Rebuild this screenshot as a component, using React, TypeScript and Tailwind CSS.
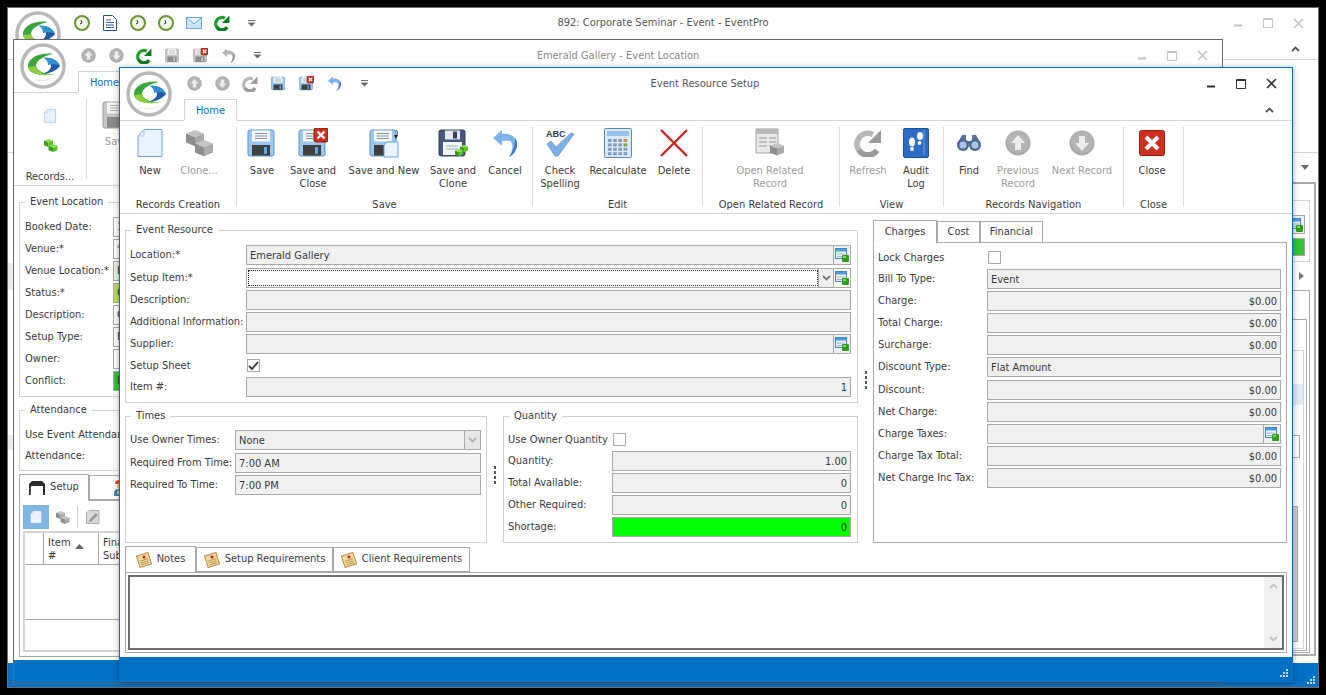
import React from 'react';

const cubeFaces = {
  gray: ['#c4c4c4', '#8e8e8e', '#a8a8a8'],
  green: ['#8ce04a', '#3f9a1c', '#5cc22c'],
};

// one isometric cube, x/y is the top corner
const Cube: React.FC<{ x: number; y: number; s: number; tone?: 'gray' | 'green' }> = ({ x, y, s, tone = 'gray' }) => {
  const [top, left, right] = cubeFaces[tone];
  return (
    <g>
      <polygon points={`${x},${y} ${x + s},${y + s * 0.4} ${x},${y + s * 0.8} ${x - s},${y + s * 0.4}`} fill={top} />
      <polygon points={`${x - s},${y + s * 0.4} ${x},${y + s * 0.8} ${x},${y + s * 1.8} ${x - s},${y + s * 1.4}`} fill={left} />
      <polygon points={`${x + s},${y + s * 0.4} ${x},${y + s * 0.8} ${x},${y + s * 1.8} ${x + s},${y + s * 1.4}`} fill={right} />
    </g>
  );
};

const Logo: React.FC<{ size?: number }> = ({ size = 46 }) => (
  <svg width={size} height={size} viewBox="0 0 46 46">
    <circle cx="23" cy="23" r="21" fill="#fff" stroke="#b9b9b9" strokeWidth="3.5" />
    <path d="M33 11C20 9 8 15 8 23c0 8 14 11 28 8-11 1-20-3-20-9 1-5 8-9 17-11z" fill="#3aa63c" />
    <path d="M8 24c1 7 14 10 28 7-11 1-19-2-20-8z" fill="#8ccf3c" />
    <path d="M24 15c8-1 14 3 16 8-3 4-10 8-18 8 6-2 9-5 9-8 0-3-3-6-7-8z" fill="#1f5aa8" />
    <path d="M24 15c8-1 14 3 15 7-4-1-8-1-11 0 0-3-1-5-4-7z" fill="#2f8fd0" />
    <path d="M14 36c6 2 14 1 20-3-6 6-14 7-20 3z" fill="#e6ecd8" />
  </svg>
);

const RoundArrow: React.FC<{ size: number; down?: boolean }> = ({ size, down }) => (
  <svg width={size} height={size} viewBox="0 0 26 26">
    <circle cx="13" cy="13" r="12.5" fill="#a9a9a9" />
    <circle cx="13" cy="12" r="11" fill="#b4b4b4" />
    <path
      d={down ? 'M10 6h6v7h4l-7 8-7-8h4z' : 'M10 20h6v-7h4l-7-8-7 8h4z'}
      fill="#ececec"
    />
  </svg>
);

const Refresh: React.FC<{ size: number; color: string; dark: string }> = ({ size, color, dark }) => (
  <svg width={size} height={size} viewBox="0 0 28 28">
    <path d="M23 21.500A11 11 0 1 1 19 5.500" fill="none" stroke={color} strokeWidth="5.500" />
    <path d="M23 21.500A11 11 0 0 1 5 21" fill="none" stroke={dark} strokeWidth="5.500" />
    <path d="M27 1v13H14z" fill={dark} />
  </svg>
);

type SaveBadge = 'none' | 'x' | 'new' | 'cubes';

const Floppy: React.FC<{ size: number; tone?: 'blue' | 'gray' | 'navy'; badge?: SaveBadge }> = ({ size, tone = 'blue', badge = 'none' }) => {
  const pal = {
    blue: { body: '#9cc6ee', edge: '#5b93cc', label: '#f4f8fc', low: '#3f3f3f', slot: '#5fa6e0' },
    gray: { body: '#c6c6c6', edge: '#9c9c9c', label: '#f2f2f2', low: '#8a8a8a', slot: '#d0d0d0' },
    navy: { body: '#46587e', edge: '#33415f', label: '#e8eef6', low: '#f2f5f9', slot: '#3a3a3a' },
  }[tone];
  const navy = tone === 'navy';
  return (
    <svg width={size} height={size} viewBox="0 0 30 30">
      <rect x="1" y="2" width="26" height="26" rx="2" fill={pal.body} stroke={pal.edge} />
      {navy ? (
        <>
          <rect x="7" y="2.500" width="15" height="9" fill="#e4e8ee" />
          <rect x="15" y="3.500" width="4" height="7" fill="#33415f" />
          <rect x="5" y="14" width="19" height="13" fill={pal.low} />
          <path d="M8 18h12M8 21h12" stroke="#9fb2cc" />
        </>
      ) : (
        <>
          <rect x="5" y="2.500" width="18" height="11" fill={pal.label} />
          <path d="M8 5.500h12M8 8h12M8 10.500h12" stroke={tone === 'blue' ? '#8a8f96' : '#b0b0b0'} />
          <rect x="5" y="17" width="18" height="10.500" fill={pal.low} />
          <rect x="17" y="19" width="3" height="7" fill={pal.slot} />
        </>
      )}
      {badge === 'x' && (
        <g>
          <rect x="16" y="0" width="14" height="14" rx="2" fill="#c9301f" stroke="#8c1c10" />
          <path d="M19.500 3.500l7 7M26.500 3.500l-7 7" stroke="#fff" strokeWidth="2.400" />
        </g>
      )}
      {badge === 'new' && (
        <g>
          <path d="M18 14h11v15H15V17z" fill="#eaf3fc" stroke="#6fa6dc" />
          <path d="M27 2c2 1 2 4 0 6" fill="none" stroke="#333" />
          <path d="M25 7h4l-2 4z" fill="#222" />
        </g>
      )}
      {badge === 'cubes' && (
        <g>
          <Cube x={26} y={17} s={4} tone="green" />
          <Cube x={21} y={21} s={4} tone="green" />
        </g>
      )}
    </svg>
  );
};

const Undo: React.FC<{ size: number; color?: string; dark?: string }> = ({ size, color = '#7db2ea', dark = '#3f78c4' }) => (
  <svg width={size} height={size} viewBox="0 0 28 28">
    <path d="M2 9L11 1v4c9-1 16 4 15 12-1 5-4 9-8 11 3-5 4-9 3-13-1-4-5-4-10-3v5z" fill={color} />
    <path d="M18 28c4-2 7-6 8-11 0.400-3-0.500-6-2-8 0 6-1 13-6 19z" fill={dark} />
  </svg>
);

const NewDoc: React.FC<{ size: number }> = ({ size }) => (
  <svg width={size} height={size} viewBox="0 0 30 30">
    <path d="M9 1.500h18v27H3V8z" fill="#eaf3fd" stroke="#6fa6dc" />
    <path d="M3 8H9V1.500" fill="none" stroke="#a9c9ec" />
  </svg>
);

const Clone: React.FC<{ size: number; tone?: 'gray' | 'green' }> = ({ size, tone = 'gray' }) => (
  <svg width={size} height={size} viewBox="0 0 30 30">
    <Cube x={11} y={2} s={9} tone={tone} />
    <Cube x={20} y={12} s={9} tone={tone} />
  </svg>
);

const SpellCheck = () => (
  <svg width="30" height="30" viewBox="0 0 30 30">
    <text x="1" y="9" fontSize="9" fontWeight="700" fontFamily="Liberation Sans, sans-serif" fill="#2f3e55">ABC</text>
    <path d="M2 16l4-3 5 6L26 5l3 1-16 22h-3z" fill="#7fb0e2" stroke="#4f86c4" strokeWidth="0.600" />
  </svg>
);

const Calculator = () => (
  <svg width="28" height="30" viewBox="0 0 28 30">
    <rect x="0.500" y="0.500" width="27" height="29" rx="1" fill="#dde8f6" stroke="#5d86bd" />
    <rect x="3" y="3" width="22" height="5" fill="#9ac3ea" />
    {[0, 1, 2, 3].flatMap((c) =>
      [0, 1, 2, 3].map((r) => (
        <rect
          key={`${c}-${r}`}
          x={4 + c * 5.2}
          y={11 + r * 4.4}
          width="3.600"
          height="3"
          fill={c === 3 && r === 0 ? '#d8903c' : c === 3 && r === 1 ? '#7aa83c' : '#7f9cc6'}
        />
      )),
    )}
  </svg>
);

const DeleteX = () => (
  <svg width="28" height="30" viewBox="0 0 28 30">
    <path d="M1 2l26 26M27 2L1 28" stroke="#c8241c" strokeWidth="2.400" />
  </svg>
);

const RelatedRecord = () => (
  <svg width="30" height="30" viewBox="0 0 30 30">
    <rect x="1" y="1" width="22" height="24" fill="#e8e8e8" stroke="#a4a4a4" />
    <rect x="1" y="1" width="22" height="5" fill="#b8b8b8" />
    <path d="M4 10h8M14 10h7M4 14h8M14 14h7M4 18h8M14 18h7" stroke="#b4b4b4" strokeWidth="1.500" />
    <Cube x={22} y={15} s={7} />
  </svg>
);

const AuditLog = () => (
  <svg width="26" height="30" viewBox="0 0 26 30">
    <rect x="0.500" y="0.500" width="25" height="29" rx="1.500" fill="#2d6cc4" stroke="#1d4f9a" />
    <path d="M21 2v25" stroke="#6ca0e0" />
    <ellipse cx="9" cy="14" rx="3" ry="4.500" fill="#f4f8ff" />
    <ellipse cx="9" cy="21" rx="2" ry="2" fill="#f4f8ff" />
    <ellipse cx="17" cy="8" rx="3" ry="4" fill="#f4f8ff" />
    <ellipse cx="16.500" cy="15" rx="2" ry="2" fill="#f4f8ff" />
  </svg>
);

const Binoculars = () => (
  <svg width="26" height="18" viewBox="0 0 26 18">
    <path d="M6 1h4v6h6V1h4l5 9H1z" fill="#5a7398" />
    <circle cx="7" cy="11" r="6" fill="#4d6a94" />
    <circle cx="19" cy="11" r="6" fill="#4d6a94" />
    <circle cx="7" cy="11" r="3.500" fill="#a9c6ea" />
    <circle cx="19" cy="11" r="3.500" fill="#a9c6ea" />
  </svg>
);

const CloseRed = () => (
  <svg width="26" height="26" viewBox="0 0 26 26">
    <rect x="0.500" y="0.500" width="25" height="25" rx="2" fill="#cc2f1e" stroke="#97200f" />
    <path d="M7 7l12 12M19 7L7 19" stroke="#fff" strokeWidth="4" />
  </svg>
);

const Lookup = () => (
  <svg width="14" height="14" viewBox="0 0 14 14">
    <rect x="0.500" y="0.500" width="11" height="10" fill="#eef4fb" stroke="#3f86d0" />
    <rect x="1" y="1" width="10" height="2.500" fill="#4d9be0" />
    <path d="M2 6h8M2 8.500h5" stroke="#9cb4cc" />
    <rect x="7" y="7" width="7" height="7" rx="1" fill="#2f9e1c" />
    <rect x="8" y="8" width="3" height="2" fill="#7fdc4c" />
  </svg>
);

const Clock = () => (
  <svg width="16" height="16" viewBox="0 0 16 16">
    <circle cx="8" cy="8" r="7" fill="#f2f6e8" stroke="#6c9632" strokeWidth="2" />
    <path d="M8 8l-1-3M8 8L6 9" stroke="#333" />
  </svg>
);

const PageIcon = () => (
  <svg width="14" height="16" viewBox="0 0 14 16">
    <path d="M0.500 0.500h9l4 4v11H0.500z" fill="#fff" stroke="#2a4f9a" />
    <path d="M3 5h5M3 7.500h8M3 10h8M3 12.500h8" stroke="#2e62c0" />
    <path d="M3 7.500h1M3 10h1M3 12.500h1" stroke="#d02828" />
  </svg>
);

const EditGray = () => (
  <svg width="14" height="14" viewBox="0 0 14 14">
    <path d="M3 0.500h10v13H0.500V3z" fill="#d8d8d8" stroke="#b0b0b0" />
    <path d="M10 3l2 2-6 6-3 1 1-3z" fill="#9a9a9a" />
  </svg>
);

const Mail = () => (
  <svg width="16" height="12" viewBox="0 0 16 12">
    <rect x="0.500" y="0.500" width="15" height="11" fill="#cfe4f8" stroke="#6fa6dc" />
    <path d="M1 1l7 6 7-6" fill="#eaf3fd" stroke="#6fa6dc" />
  </svg>
);

const NoteIcon = () => (
  <svg width="16" height="16" viewBox="0 0 16 16">
    <g transform="rotate(-18 8 8)">
      <rect x="2" y="2" width="12" height="12" fill="#f0d79c" stroke="#b88a4c" />
      <path d="M4 8h8M4 10h8M4 12h8" stroke="#c49c5c" />
    </g>
    <circle cx="8" cy="5" r="1.500" fill="#c02020" />
  </svg>
);

const Chair = () => (
  <svg width="16" height="14" viewBox="0 0 16 14">
    <path d="M3 0h10l3 3v11h-2V5H2v9H0V3z" fill="#2a2a2a" />
    <rect x="1" y="6" width="1" height="8" fill="#666" />
  </svg>
);

const Worker = () => (
  <svg width="14" height="16" viewBox="0 0 14 16">
    <path d="M3 4a4 4 0 0 1 8 0z" fill="#e0501c" />
    <circle cx="7" cy="6" r="2.500" fill="#f2c49c" />
    <path d="M2 16v-4c0-2 2-3 5-3s5 1 5 3v4z" fill="#3c82c8" />
    <path d="M5 11h4v3H5z" fill="#f2d23c" />
  </svg>
);

const Caret = () => (
  <svg width="9" height="7" viewBox="0 0 9 7">
    <path d="M1 0.500h7" stroke="#6a6a6a" />
    <path d="M0.500 2.500h8L4.500 6.500z" fill="#6a6a6a" />
  </svg>
);

const ChevronUp: React.FC<{ color?: string }> = ({ color = '#555' }) => (
  <svg width="9" height="6" viewBox="0 0 9 6">
    <path d="M1 5l3.500-3.500L8 5" fill="none" stroke={color} strokeWidth="1.800" />
  </svg>
);

const ChevronDown: React.FC<{ color?: string }> = ({ color = '#777' }) => (
  <svg width="9" height="6" viewBox="0 0 9 6">
    <path d="M1 1l3.500 3.500L8 1" fill="none" stroke={color} strokeWidth="1.800" />
  </svg>
);

const WinControls: React.FC<{ color: string }> = ({ color }) => (
  <div className="flex items-center">
    <span className="flex w-[30px] justify-center">
      <svg width="10" height="10" viewBox="0 0 10 10"><path d="M1 7.500h8" stroke={color} strokeWidth="2" /></svg>
    </span>
    <span className="flex w-[30px] justify-center">
      <svg width="10" height="10" viewBox="0 0 10 10"><path d="M0.500 0.500h9v9h-9zM0.500 1.500h9" fill="none" stroke={color} /></svg>
    </span>
    <span className="flex w-[30px] justify-center">
      <svg width="11" height="11" viewBox="0 0 11 11"><path d="M1 1l9 9M10 1l-9 9" stroke={color} strokeWidth="1.600" /></svg>
    </span>
  </div>
);

const Grip = () => (
  <svg width="9" height="9" viewBox="0 0 9 9">
    {[[6, 0], [3, 3], [6, 3], [0, 6], [3, 6], [6, 6]].map(([x, y]) => (
      <rect key={`${x}-${y}`} x={x} y={y} width="2" height="2" fill="#c5d9ea" />
    ))}
  </svg>
);

const SplitDots = () => (
  <div className="flex flex-col gap-[2px]">
    <span className="h-[3px] w-[2px] bg-[#555]" />
    <span className="h-[3px] w-[2px] bg-[#555]" />
    <span className="h-[3px] w-[2px] bg-[#555]" />
    <span className="h-[3px] w-[2px] bg-[#555]" />
  </div>
);

const Box: React.FC<{ title: string; className: string; children?: React.ReactNode }> = ({ title, className, children }) => (
  <div className={`relative border border-[#d0d0d0] ${className}`}>
    <span className="absolute -top-[8px] left-[5px] bg-white px-[5px] leading-[14px]">{title}</span>
    {children}
  </div>
);

const Input: React.FC<{ value?: string; right?: boolean; className?: string; children?: React.ReactNode }> = ({ value, right, className = 'bg-[#f0f0f0]', children }) => (
  <div className={`flex h-5 min-w-0 flex-1 items-center border border-[#a9a9a9] ${className}`}>
    <span className={`flex-1 px-[3px] pt-px leading-[14px] ${right ? 'text-right' : ''}`}>{value}</span>
    {children}
  </div>
);

const LookupBtn = () => (
  <span className="flex h-full w-[17px] items-center justify-center border-l border-[#a9a9a9]">
    <Lookup />
  </span>
);

const Row: React.FC<{ label: string; labelW: string; value?: string; right?: boolean; lookup?: boolean; select?: boolean; mb?: string; green?: boolean }> = ({ label, labelW, value, right, lookup, select, mb = 'mb-[2px]', green }) => (
  <div className={`flex h-5 items-center ${mb}`}>
    <span className={`${labelW} shrink-0 whitespace-nowrap pt-px`}>{label}</span>
    <Input value={value} right={right} className={green ? 'bg-[#00ff00]' : 'bg-[#f0f0f0]'}>
      {select && (
        <span className="flex h-full w-[16px] items-center justify-center border-l border-[#a9a9a9] bg-[#e6e6e6]">
          <ChevronDown color="#b4b4b4" />
        </span>
      )}
      {lookup && <LookupBtn />}
    </Input>
  </div>
);

const Check: React.FC<{ checked?: boolean }> = ({ checked }) => (
  <span className="flex h-[13px] w-[13px] items-center justify-center border border-[#a9a9a9] bg-white">
    {checked && (
      <svg width="11" height="10" viewBox="0 0 11 10"><path d="M1 5l3 3 6-7" fill="none" stroke="#333" strokeWidth="1.800" /></svg>
    )}
  </span>
);

const RibbonBtn: React.FC<{ w: string; icon: React.ReactNode; label: React.ReactNode; off?: boolean }> = ({ w, icon, label, off }) => (
  <div className={`${w} flex shrink-0 flex-col items-center text-center ${off ? 'text-[#9c9c9c]' : ''}`}>
    <div className="flex h-[32px] items-center justify-center">{icon}</div>
    <div className="mt-[5px] leading-[13px]">{label}</div>
  </div>
);

const Group: React.FC<{ w: string; pl: string; label: string; children: React.ReactNode }> = ({ w, pl, label, children }) => (
  <>
    <div className={`${w} flex h-[85px] shrink-0 flex-col`}>
      <div className={`flex flex-1 ${pl}`}>{children}</div>
      <div className="h-[14px] whitespace-nowrap text-center leading-[14px]">{label}</div>
    </div>
    <div className="h-[80px] w-px shrink-0 bg-[#dcdcdc]" />
  </>
);

const TabBtn: React.FC<{ w: string; active?: boolean; children: React.ReactNode; h?: string }> = ({ w, active, children, h }) => (
  <div className={`flex ${w} shrink-0 items-center justify-center gap-[5px] border border-[#a9a9a9] ${active ? `${h} -mb-px border-b-white bg-white` : `${h} bg-white`}`}>
    {children}
  </div>
);

// the window at the back, only its edges show
const BackWindow = () => (
  <div className="absolute left-[7px] top-[7px] flex h-[681px] w-[1312px] flex-col overflow-hidden border border-[#707070] bg-white">
    <span className="absolute left-0 top-[255px] h-[27px] w-[6px] bg-[#ececec]" />
    <span className="absolute left-0 top-[427px] h-[15px] w-[6px] bg-[#ececec]" />
    <div className="relative flex h-[30px] shrink-0 items-center">
      <div className="absolute left-[7px] top-[3px]"><Logo /></div>
      <div className="flex items-center pl-[60px]">
        <span className="flex w-[28px] justify-center"><Clock /></span>
        <span className="flex w-[28px] justify-center"><PageIcon /></span>
        <span className="flex w-[28px] justify-center"><Clock /></span>
        <span className="flex w-[28px] justify-center"><Clock /></span>
        <span className="flex w-[28px] justify-center"><Mail /></span>
        <span className="flex w-[28px] justify-center"><Refresh size={16} color="#1f9c2c" dark="#0a7a1c" /></span>
        <span className="flex w-[30px] justify-center"><Caret /></span>
      </div>
      <span className="absolute left-0 right-0 pt-px text-center text-[#555]">892: Corporate Seminar - Event - EventPro</span>
      <div className="ml-auto pr-[5px]"><WinControls color="#c4c4c4" /></div>
    </div>
    <div className="flex h-[22px] shrink-0 items-center justify-end border-b border-[#d4d4d4] pr-[18px]">
      <ChevronUp />
    </div>
    <div className="h-[93px] shrink-0 border-b border-[#d4d4d4]" />
    <div className="flex h-[29px] shrink-0 items-center justify-end pr-[9px]">
      <svg width="8" height="5" viewBox="0 0 8 5"><path d="M0 0h8L4 5z" fill="#666" /></svg>
    </div>
    <div className="ml-auto mr-[2px] flex h-[474px] w-[200px] shrink-0 flex-col items-end border-[2px] border-[#a9a9a9] pb-px pr-[4px] pt-[16px]">
      <div className="flex h-[62px] w-[150px] shrink-0 flex-col items-end justify-end gap-[4px] border border-[#d4d4d4] pb-[5px] pr-[4px]">
        <span className="flex h-[19px] w-[80px] items-center justify-end border border-[#a9a9a9] bg-[#f0f0f0] pr-[1px]"><Lookup /></span>
        <span className="h-[18px] w-[80px] border border-[#a9a9a9] bg-[#34c634]" />
      </div>
      <div className="flex h-[28px] shrink-0 items-center pr-[6px]">
        <svg width="5" height="8" viewBox="0 0 5 8"><path d="M0 0l5 4-5 4z" fill="#777" /></svg>
      </div>
      <div className="flex min-h-0 w-[150px] flex-1 flex-col items-end border border-[#a9a9a9] pb-px pr-[2px] pt-[28px]">
        <div className="flex min-h-0 w-[120px] flex-1 flex-col items-end border border-[#a9a9a9] pb-px pr-[2px] pt-[30px]">
          <div className="flex min-h-0 w-[100px] flex-1 flex-col items-end border border-[#d4d4d4] pb-px pt-[33px]">
            <div className="h-[21px] w-[90px] shrink-0 bg-[#deeaf6]" />
            <div className="mr-[3px] mt-[30px] h-[23px] w-[80px] shrink-0 border border-[#a9a9a9]" />
            <div className="mr-[5px] mt-[48px] h-[136px] w-[50px] shrink-0 border border-[#a9a9a9] bg-[#cfcfd4]" />
          </div>
        </div>
      </div>
    </div>
    <div className="mt-auto flex h-[24px] shrink-0 items-end justify-end bg-[#0070c4] pb-[2px] pr-[2px]">
      <Grip />
    </div>
  </div>
);

// only the first character of each value shows past the front window
const MiddleRow: React.FC<{ label: string; value?: string; fill?: string }> = ({ label, value, fill = 'bg-white' }) => (
  <div className="mb-[2px] flex h-5 items-center">
    <span className="w-[88px] shrink-0 whitespace-nowrap">{label}</span>
    <span className={`h-5 flex-1 border border-[#a9a9a9] px-[3px] leading-[18px] ${fill}`}>{value}</span>
  </div>
);

const MiddleWindow = () => (
  <div className="absolute left-[13px] top-[39px] flex h-[645px] w-[1210px] flex-col overflow-hidden border border-[#696969] bg-white">
    <div className="relative flex h-[31px] shrink-0 items-center">
      <div className="absolute left-[6px] top-[3px]"><Logo /></div>
      <div className="flex items-center pl-[60px]">
        <span className="flex w-[28px] justify-center"><RoundArrow size={15} /></span>
        <span className="flex w-[28px] justify-center"><RoundArrow size={15} down /></span>
        <span className="flex w-[28px] justify-center"><Refresh size={16} color="#1f9c2c" dark="#0a7a1c" /></span>
        <span className="flex w-[28px] justify-center"><Floppy size={15} tone="gray" /></span>
        <span className="flex w-[28px] justify-center"><Floppy size={15} tone="gray" badge="x" /></span>
        <span className="flex w-[28px] justify-center"><Undo size={15} color="#b4b4b4" dark="#8c8c8c" /></span>
        <span className="flex w-[30px] justify-center"><Caret /></span>
      </div>
      <span className="absolute left-0 right-0 pt-px text-center text-[#888]">Emerald Gallery - Event Location</span>
      <div className="ml-auto pr-[5px]"><WinControls color="#c4c4c4" /></div>
    </div>
    <div className="flex h-[22px] shrink-0 border-b border-[#d4d4d4] pl-[64px]">
      <div className="-mb-px flex h-[22px] w-[53px] items-center justify-center border border-b-white border-[#d4d4d4] bg-white pt-[2px] text-[#0072c6]">Home</div>
    </div>
    <div className="flex h-[93px] shrink-0 border-b border-[#d4d4d4] pt-[6px]">
      <div className="flex h-[85px] w-[72px] shrink-0 flex-col items-center">
        <div className="mt-[1px] flex h-[32px] items-center"><NewDoc size={14} /></div>
        <div className="flex h-[26px] items-center"><Clone size={15} tone="green" /></div>
        <div className="mt-auto whitespace-nowrap leading-[14px]">Records...</div>
      </div>
      <div className="h-[80px] w-px shrink-0 bg-[#dcdcdc]" />
      <div className="flex w-[60px] flex-col items-center pt-[1px] text-[#9c9c9c]">
        <Floppy size={30} tone="gray" />
        <span className="mt-[4px]">Save</span>
      </div>
    </div>
    <div className="px-[5px] pt-[16px]">
      <Box title="Event Location" className="h-[195px] pl-[5px] pr-[5px] pt-[14px]">
        <MiddleRow label="Booked Date:" value="1" />
        <MiddleRow label="Venue:*" value="*" />
        <MiddleRow label="Venue Location:*" value="E" fill="bg-[#e6f4df]" />
        <MiddleRow label="Status:*" value="C" fill="bg-[#bede5c]" />
        <MiddleRow label="Description:" value="C" />
        <MiddleRow label="Setup Type:" value="B" />
        <MiddleRow label="Owner:" />
        <MiddleRow label="Conflict:" value="N" fill="bg-[#34c634]" />
      </Box>
      <Box title="Attendance" className="mt-[13px] h-[61px] pl-[5px] pt-[14px]">
        <div className="flex h-5 items-center whitespace-nowrap">Use Event Attendan</div>
        <div className="mt-[1px] flex h-5 items-center whitespace-nowrap">Attendance:</div>
      </Box>
      <div className="mt-[2px] flex h-[27px] items-end">
        <TabBtn w="w-[70px]" active h="h-[27px]"><Chair /><span>Setup</span></TabBtn>
        <TabBtn w="w-[60px]" h="h-[25px]"><Worker /></TabBtn>
      </div>
      <div className="h-[157px] border border-[#a9a9a9] px-[3px] pt-[4px]">
        <div className="flex h-[24px] items-center">
          <span className="flex h-[24px] w-[26px] items-center justify-center bg-[#7fb6e2]"><NewDoc size={14} /></span>
          <span className="ml-[5px] flex w-[16px] justify-center"><Clone size={15} /></span>
          <span className="mx-[7px] h-[22px] w-px bg-[#ccc]" />
          <span className="flex w-[16px] justify-center"><EditGray /></span>
        </div>
        <div className="mt-[2px] flex h-[121px] flex-col border-[2px] border-[#d4d4d4]">
          <div className="flex h-[32px] border-b border-[#a9a9a9] leading-[13px]">
            <span className="w-[19px] border-r border-[#a9a9a9]" />
            <span className="flex w-[55px] justify-between border-r border-[#a9a9a9] pl-[4px] pr-[14px] pt-[3px]">
              <span>Item<br />#</span>
              <svg className="mt-[8px]" width="9" height="5" viewBox="0 0 9 5"><path d="M0 5h9L4.500 0z" fill="#666" /></svg>
            </span>
            <span className="pl-[4px] pt-[3px]">Fina<br />Sub</span>
          </div>
          <div className="h-[55px] border-b border-[#a9a9a9]" />
        </div>
      </div>
    </div>
    <div className="mt-auto flex h-[23px] shrink-0 bg-[#0070c4]" />
  </div>
);

const FrontWindow = () => (
  <div className="absolute left-[119px] top-[67px] flex h-[615px] w-[1174px] flex-col overflow-hidden border border-[#0070c4] bg-white shadow-[0_1px_6px_rgba(0,0,0,0.35)]">
    {/* title row */}
    <div className="relative flex h-[31px] shrink-0 items-center">
      <div className="absolute left-[6px] top-[3px] z-10"><Logo /></div>
      <div className="flex items-center pl-[60px]">
        <span className="flex w-[28px] justify-center"><RoundArrow size={15} /></span>
        <span className="flex w-[28px] justify-center"><RoundArrow size={15} down /></span>
        <span className="flex w-[28px] justify-center"><Refresh size={16} color="#b8b8b8" dark="#9a9a9a" /></span>
        <span className="flex w-[28px] justify-center"><Floppy size={15} /></span>
        <span className="flex w-[28px] justify-center"><Floppy size={15} badge="x" /></span>
        <span className="flex w-[28px] justify-center"><Undo size={15} /></span>
        <span className="flex w-[32px] justify-center"><Caret /></span>
      </div>
      <span className="absolute left-0 right-[2px] pt-px text-center text-[#555]">Event Resource Setup</span>
      <div className="ml-auto pr-[6px]"><WinControls color="#333" /></div>
    </div>
    {/* tab row */}
    <div className="flex h-[22px] shrink-0 justify-between border-b border-[#d4d4d4] pl-[64px] pr-[18px]">
      <div className="-mb-px flex h-[22px] w-[53px] items-center justify-center border border-b-white border-[#d4d4d4] bg-white pt-[2px] text-[#0072c6]">Home</div>
      <div className="flex items-center"><ChevronUp /></div>
    </div>
    {/* ribbon */}
    <div className="flex h-[93px] shrink-0 border-b border-[#d4d4d4] pt-[6px]">
      <Group w="w-[116px]" pl="pl-[10px]" label="Records Creation">
        <RibbonBtn w="w-[40px]" icon={<NewDoc size={30} />} label="New" />
        <RibbonBtn w="w-[58px]" icon={<Clone size={30} />} label="Clone..." off />
      </Group>
      <Group w="w-[295px]" pl="pl-[5px]" label="Save">
        <RibbonBtn w="w-[40px]" icon={<Floppy size={30} />} label="Save" />
        <RibbonBtn w="w-[62px]" icon={<Floppy size={30} badge="x" />} label={<>Save and<br />Close</>} />
        <RibbonBtn w="w-[80px]" icon={<Floppy size={30} badge="new" />} label="Save and New" />
        <RibbonBtn w="w-[58px]" icon={<Floppy size={30} tone="navy" badge="cubes" />} label={<>Save and<br />Clone</>} />
        <RibbonBtn w="w-[46px]" icon={<Undo size={28} />} label="Cancel" />
      </Group>
      <Group w="w-[169px]" pl="pl-[2px]" label="Edit">
        <RibbonBtn w="w-[50px]" icon={<SpellCheck />} label={<>Check<br />Spelling</>} />
        <RibbonBtn w="w-[66px]" icon={<Calculator />} label="Recalculate" />
        <RibbonBtn w="w-[46px]" icon={<DeleteX />} label="Delete" />
      </Group>
      <Group w="w-[136px]" pl="pl-[17px]" label="Open Related Record">
        <RibbonBtn w="w-[100px]" icon={<RelatedRecord />} label={<>Open Related<br />Record</>} off />
      </Group>
      <Group w="w-[103px]" pl="pl-[4px]" label="View">
        <RibbonBtn w="w-[48px]" icon={<Refresh size={28} color="#b8b8b8" dark="#9a9a9a" />} label="Refresh" off />
        <RibbonBtn w="w-[48px]" icon={<AuditLog />} label={<>Audit<br />Log</>} />
      </Group>
      <Group w="w-[179px]" pl="pl-[1px]" label="Records Navigation">
        <RibbonBtn w="w-[48px]" icon={<Binoculars />} label="Find" />
        <RibbonBtn w="w-[50px]" icon={<RoundArrow size={26} />} label={<>Previous<br />Record</>} off />
        <RibbonBtn w="w-[78px]" icon={<RoundArrow size={26} down />} label="Next Record" off />
      </Group>
      <Group w="w-[59px]" pl="pl-[3px]" label="Close">
        <RibbonBtn w="w-[50px]" icon={<CloseRed />} label="Close" />
      </Group>
    </div>
    {/* form */}
    <div className="flex h-[329px] shrink-0 pl-[5px] pt-[5px]">
      <div className="w-[733px] shrink-0 pt-[11px]">
        <Box title="Event Resource" className="h-[173px] pl-[4px] pr-[6px] pt-[14px]">
          <Row label="Location:*" labelW="w-[116px]" value="Emerald Gallery" lookup mb="mb-[3px]" />
          <div className="mb-[2px] flex h-5 items-center">
            <span className="w-[116px] shrink-0 pt-px">Setup Item:*</span>
            <div className="flex h-5 flex-1 items-center border border-[#a9a9a9] bg-white">
              <span className="ml-px h-[16px] flex-1 border border-dotted border-[#222]" />
              <span className="flex h-full w-[16px] items-center justify-center border-x border-[#a9a9a9] bg-[#f0f0f0]"><ChevronDown /></span>
              <span className="flex w-[16px] items-center justify-center"><Lookup /></span>
            </div>
          </div>
          <Row label="Description:" labelW="w-[116px]" />
          <Row label="Additional Information:" labelW="w-[116px]" />
          <Row label="Supplier:" labelW="w-[116px]" lookup />
          <div className="mb-[2px] flex h-[19px] items-center">
            <span className="w-[117px] shrink-0 pt-[2px]">Setup Sheet</span>
            <Check checked />
          </div>
          <Row label="Item #:" labelW="w-[116px]" value="1" right />
        </Box>
        <div className="mt-[13px] flex">
          <Box title="Times" className="h-[127px] w-[362px] shrink-0 pl-[4px] pr-[5px] pt-[13px]">
            <Row label="Use Owner Times:" labelW="w-[105px]" value="None" select mb="mb-[3px]" />
            <Row label="Required From Time:" labelW="w-[105px]" value="7:00 AM" />
            <Row label="Required To Time:" labelW="w-[105px]" value="7:00 PM" />
          </Box>
          <div className="flex w-[16px] shrink-0 justify-center pt-[50px]"><SplitDots /></div>
          <Box title="Quantity" className="h-[127px] flex-1 pl-[4px] pr-[6px] pt-[13px]">
            <div className="mb-[2px] flex h-[19px] items-center">
              <span className="w-[105px] shrink-0 whitespace-nowrap pt-[2px]">Use Owner Quantity</span>
              <Check />
            </div>
            <Row label="Quantity:" labelW="w-[104px]" value="1.00" right />
            <Row label="Total Available:" labelW="w-[104px]" value="0" right />
            <Row label="Other Required:" labelW="w-[104px]" value="0" right />
            <Row label="Shortage:" labelW="w-[104px]" value="0" right green />
          </Box>
        </div>
      </div>
      <div className="flex w-[15px] shrink-0 justify-center pt-[152px]"><SplitDots /></div>
      <div className="flex w-[414px] shrink-0 flex-col">
        <div className="relative z-10 flex h-[24px] items-end">
          <TabBtn w="w-[64px]" active h="h-[24px]">Charges</TabBtn>
          <TabBtn w="w-[43px]" h="h-[22px]">Cost</TabBtn>
          <TabBtn w="w-[63px]" h="h-[22px]">Financial</TabBtn>
        </div>
        <div className="-mt-px h-[301px] border border-[#a9a9a9] pl-[4px] pr-[5px] pt-[5px]">
          <div className="mb-[2px] flex h-[19px] items-center">
            <span className="w-[110px] shrink-0 pt-[2px]">Lock Charges</span>
            <Check />
          </div>
          <Row label="Bill To Type:" labelW="w-[109px]" value="Event" />
          <Row label="Charge:" labelW="w-[109px]" value="$0.00" right />
          <Row label="Total Charge:" labelW="w-[109px]" value="$0.00" right />
          <Row label="Surcharge:" labelW="w-[109px]" value="$0.00" right />
          <Row label="Discount Type:" labelW="w-[109px]" value="Flat Amount" mb="mb-[3px]" />
          <Row label="Discount:" labelW="w-[109px]" value="$0.00" right />
          <Row label="Net Charge:" labelW="w-[109px]" value="$0.00" right />
          <Row label="Charge Taxes:" labelW="w-[109px]" lookup />
          <Row label="Charge Tax Total:" labelW="w-[109px]" value="$0.00" right />
          <Row label="Net Charge Inc Tax:" labelW="w-[109px]" value="$0.00" right />
        </div>
      </div>
    </div>
    {/* notes */}
    <div className="mt-[2px] flex h-[27px] shrink-0 items-end pl-[5px]">
      <TabBtn w="w-[71px]" active h="h-[27px]"><NoteIcon /><span>Notes</span></TabBtn>
      <TabBtn w="w-[137px]" h="h-[25px]"><NoteIcon /><span>Setup Requirements</span></TabBtn>
      <TabBtn w="w-[137px]" h="h-[25px]"><NoteIcon /><span>Client Requirements</span></TabBtn>
    </div>
    <div className="ml-[5px] h-[81px] w-[1162px] shrink-0 border border-[#a9a9a9] p-[2px]">
      <div className="flex h-full justify-end border-[2px] border-[#6e6e6e] bg-white">
        <div className="flex w-[18px] flex-col items-center justify-between bg-[#f0f0f0] py-[6px]">
          <ChevronUp color="#c4c4c4" />
          <ChevronDown color="#c4c4c4" />
        </div>
      </div>
    </div>
    <div className="mt-auto flex h-[24px] shrink-0 items-end justify-end bg-[#0070c4] pb-[3px] pr-[3px]">
      <Grip />
    </div>
  </div>
);

export default function App() {
  return (
    <div className="relative h-[695px] w-[1326px] overflow-hidden bg-black font-['DejaVu_Sans_Condensed','Noto_Sans',sans-serif] text-[11px] text-[#3a3a3a]">
      <BackWindow />
      <MiddleWindow />
      <FrontWindow />
    </div>
  );
}
